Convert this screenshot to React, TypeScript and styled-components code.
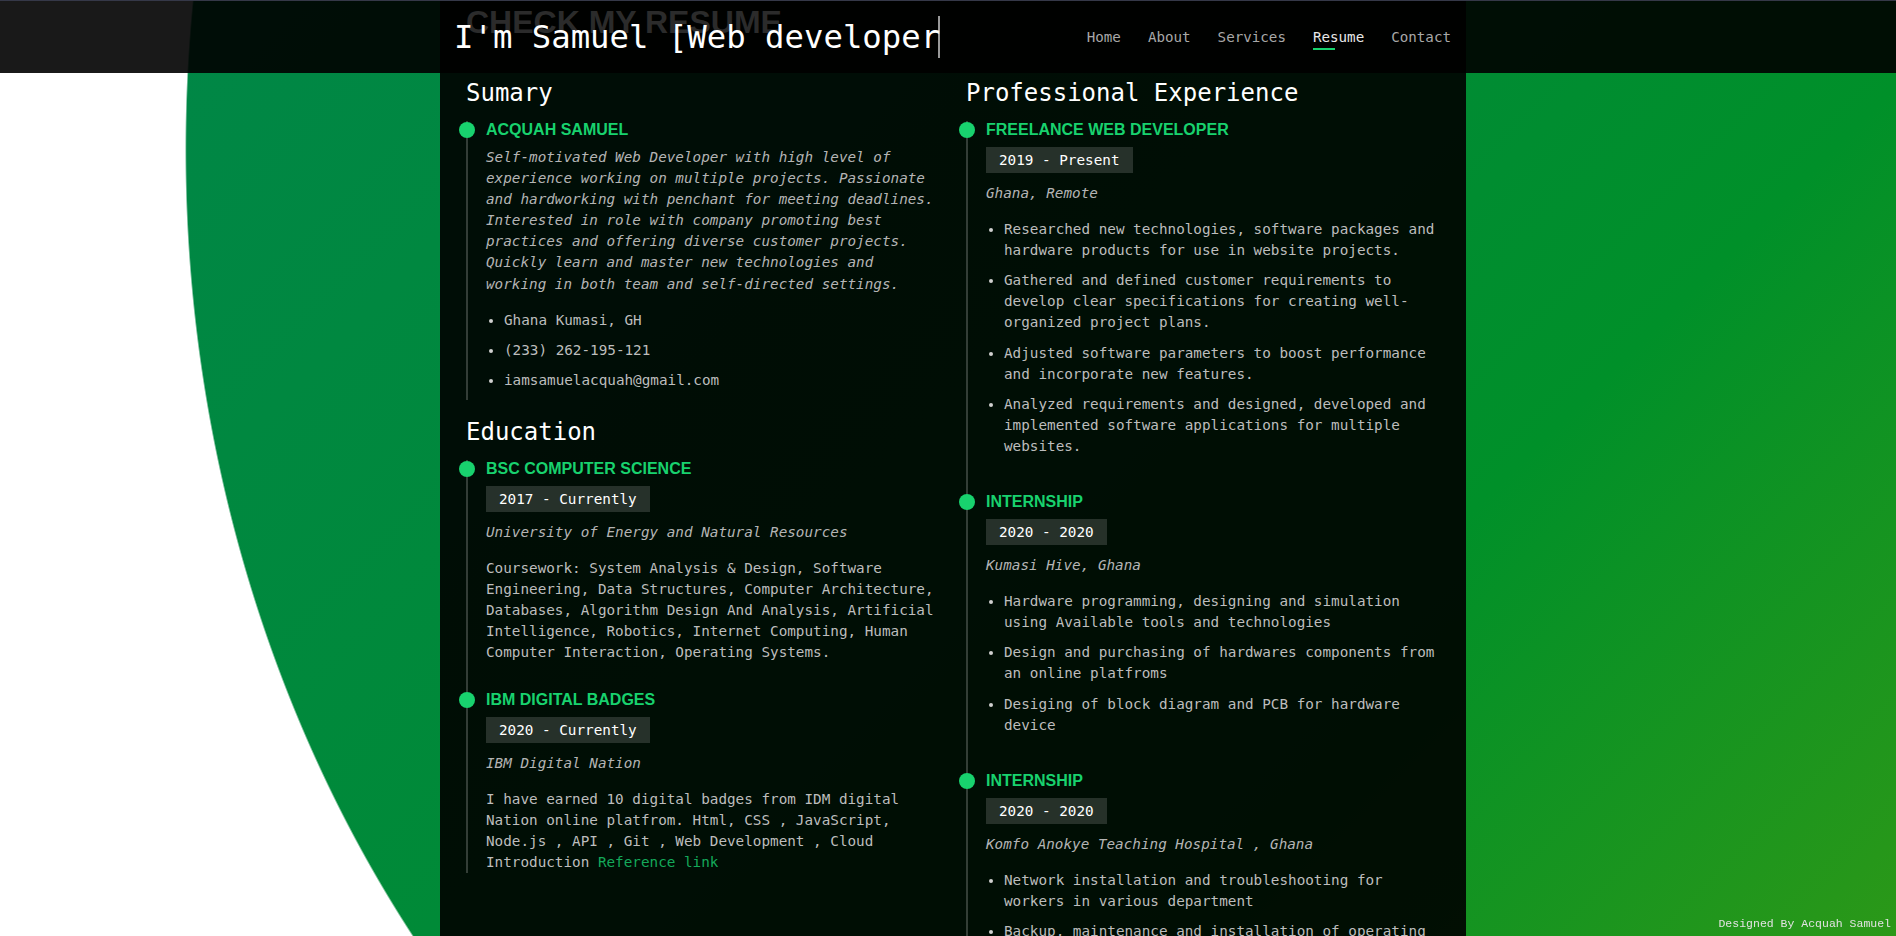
import React from 'react'
import styled, { createGlobalStyle } from 'styled-components'

const MONO = `'DejaVu Sans Mono', 'Liberation Mono', monospace`
const SANS = `'Liberation Sans', Arial, sans-serif`
const GREEN = '#18d26e'

// Link used inside the data below, so it has to exist first
const RefLink = styled.a`
  color: #14a95a;
  text-decoration: none;
`

// Data
interface Entry {
  title: string
  period?: string
  place?: string
  text?: React.ReactNode
  points?: string[]
}

const summary: Entry = {
  title: 'Acquah Samuel',
  place:
    'Self-motivated Web Developer with high level of experience working on multiple projects. Passionate and hardworking with penchant for meeting deadlines. Interested in role with company promoting best practices and offering diverse customer projects. Quickly learn and master new technologies and working in both team and self-directed settings.',
  points: ['Ghana Kumasi, GH', '(233) 262-195-121', 'iamsamuelacquah@gmail.com'],
}

const education: Entry[] = [
  {
    title: 'BSc Computer Science',
    period: '2017 - Currently',
    place: 'University of Energy and Natural Resources',
    text: 'Coursework: System Analysis & Design, Software Engineering, Data Structures, Computer Architecture, Databases, Algorithm Design And Analysis, Artificial Intelligence, Robotics, Internet Computing, Human Computer Interaction, Operating Systems.',
  },
  {
    title: 'IBM Digital Badges',
    period: '2020 - Currently',
    place: 'IBM Digital Nation',
    text: (
      <>
        I have earned 10 digital badges from IDM digital Nation online platfrom. Html, CSS , JavaScript, Node.js , API ,
        Git , Web Development , Cloud Introduction <RefLink href='#'>Reference link</RefLink>
      </>
    ),
  },
]

const experience: Entry[] = [
  {
    title: 'Freelance Web Developer',
    period: '2019 - Present',
    place: 'Ghana, Remote',
    points: [
      'Researched new technologies, software packages and hardware products for use in website projects.',
      'Gathered and defined customer requirements to develop clear specifications for creating well-organized project plans.',
      'Adjusted software parameters to boost performance and incorporate new features.',
      'Analyzed requirements and designed, developed and implemented software applications for multiple websites.',
    ],
  },
  {
    title: 'Internship',
    period: '2020 - 2020',
    place: 'Kumasi Hive, Ghana',
    points: [
      'Hardware programming, designing and simulation using Available tools and technologies',
      'Design and purchasing of hardwares components from an online platfroms',
      'Desiging of block diagram and PCB for hardware device',
    ],
  },
  {
    title: 'Internship',
    period: '2020 - 2020',
    place: 'Komfo Anokye Teaching Hospital , Ghana',
    points: [
      'Network installation and troubleshooting for workers in various department',
      'Backup, maintenance and installation of operating systems and software applications',
    ],
  },
]

const navItems = ['Home', 'About', 'Services', 'Resume', 'Contact']

// Timeline item
function ResumeItem({ entry }: { entry: Entry }): JSX.Element {
  return (
    <Item>
      <ItemHeading>{entry.title}</ItemHeading>
      {entry.period && <Period>{entry.period}</Period>}
      {entry.place && <Place>{entry.place}</Place>}
      {entry.text && <Text>{entry.text}</Text>}
      {entry.points && (
        <Points>
          {entry.points.map(point => (
            <Point key={point}>{point}</Point>
          ))}
        </Points>
      )}
    </Item>
  )
}

export default function App(): JSX.Element {
  return (
    <Page>
      <GlobalStyle />
      <Header>
        <HeaderInner>
          <Brand>
            I'm Samuel [Web developer<Cursor />
          </Brand>
          <Nav>
            {navItems.map(item => (
              <NavLink key={item} href='#' $active={item === 'Resume'}>
                {item}
              </NavLink>
            ))}
          </Nav>
        </HeaderInner>
      </Header>

      <Panel>
        <GhostTitle>Check my resume</GhostTitle>
        <Columns>
          <Column>
            <Section>
              <SectionTitle>Sumary</SectionTitle>
              <ResumeItem entry={summary} />
            </Section>
            <Section>
              <SectionTitle>Education</SectionTitle>
              {education.map(entry => (
                <ResumeItem key={entry.title} entry={entry} />
              ))}
            </Section>
          </Column>
          <Column>
            <Section>
              <SectionTitle>Professional Experience</SectionTitle>
              {experience.map(entry => (
                <ResumeItem key={entry.place} entry={entry} />
              ))}
            </Section>
          </Column>
        </Columns>
      </Panel>

      <Credit>Designed By Acquah Samuel</Credit>
    </Page>
  )
}

// Styled components
const GlobalStyle = createGlobalStyle`
  * { box-sizing: border-box; }
  html, body {
    margin: 0;
    padding: 0;
    height: 100%;
    overflow: hidden;
  }
  body {
    font-family: ${MONO};
    background: #fff;
  }
`

const Page = styled.div`
  height: 100vh;
  overflow: hidden;
  background:
    radial-gradient(1115px 1300px at 1300px 150px, rgba(255, 255, 255, 0) 99.85%, #ffffff 100%),
    linear-gradient(135deg, #008649 0%, #008a37 48%, #009029 70%, #2b9818 100%);
`

const Header = styled.header`
  position: absolute;
  top: 0;
  left: 0;
  right: 0;
  height: 73px;
  border-top: 1px solid #353848;
  background: rgba(0, 0, 0, 0.9);
`

const HeaderInner = styled.div`
  width: 1026px;
  height: 100%;
  margin-left: calc(50% - 508px);
  padding: 0 15px 0 14px;
  display: flex;
  align-items: center;
  justify-content: space-between;
`

const Brand = styled.h1`
  position: relative;
  z-index: 2;
  margin: 0;
  display: flex;
  align-items: center;
  font: 400 32.3px/39px ${MONO};
  color: #fff;
  white-space: pre;
`

const Cursor = styled.span`
  width: 2px;
  height: 42px;
  margin-left: -2px;
  background: rgba(255, 255, 255, 0.6);
`

const Nav = styled.nav`
  position: relative;
  z-index: 2;
  display: flex;
  gap: 27px;
`

const NavLink = styled.a<{ $active?: boolean }>`
  position: relative;
  font: 400 14.2px/20px ${MONO};
  color: ${props => (props.$active ? '#e8e8e8' : '#a8a8a8')};
  text-decoration: none;

  &::after {
    content: '';
    display: ${props => (props.$active ? 'block' : 'none')};
    position: absolute;
    left: 0;
    bottom: -3px;
    width: 22px;
    height: 2px;
    background: ${GREEN};
  }
`

const Panel = styled.main`
  width: 1026px;
  min-height: 100%;
  margin-left: calc(50% - 508px);
  padding: 6px 27px 40px 26px;
  background: rgba(0, 0, 0, 0.9);
`

const GhostTitle = styled.h2`
  position: relative;
  margin: 0 0 23px;
  font: 700 32px/32px ${SANS};
  text-transform: uppercase;
  color: #2b2b2b;
`

const Columns = styled.div`
  display: grid;
  grid-template-columns: 1fr 1fr;
  column-gap: 27px;
`

const Column = styled.div`
  display: flex;
  flex-direction: column;
`

const Section = styled.section`
  display: flex;
  flex-direction: column;
`

const SectionTitle = styled.h3`
  margin: 18px 0 14px;
  font: 400 24px/28px ${MONO};
  color: #fff;
`

const Item = styled.div`
  position: relative;
  padding: 0 0 27px 18px;
  border-left: 2px solid rgba(255, 255, 255, 0.2);
  font: 400 14.3px/21.1px ${MONO};
  color: #bdbdbd;

  &:last-child {
    padding-bottom: 0;
  }

  &::before {
    content: '';
    position: absolute;
    left: -9px;
    top: 1px;
    width: 16px;
    height: 16px;
    border-radius: 50%;
    background: ${GREEN};
  }

  & > *:last-child {
    margin-bottom: 0;
  }
`

const ItemHeading = styled.h4`
  margin: 0 0 8px;
  font: 700 16px/18px ${SANS};
  text-transform: uppercase;
  color: ${GREEN};
`

const Period = styled.h5`
  width: fit-content;
  margin: 0 0 10px;
  padding: 4px 13px;
  font: 400 14.3px/18px ${MONO};
  color: #fff;
  background: rgba(255, 255, 255, 0.15);
`

const Place = styled.p`
  margin: 0 0 15px;
  font-style: italic;
  color: #b4b4b4;
`

const Text = styled.p`
  margin: 0 0 15px;
`

const Points = styled.ul`
  margin: 0 0 15px;
  padding-left: 18px;
`

const Point = styled.li`
  padding-bottom: 9px;

  &::marker {
    font-family: ${SANS};
    color: #d0d0d0;
  }
`

const Credit = styled.footer`
  position: fixed;
  right: 5px;
  bottom: 5px;
  font: 400 11.5px/14px 'Liberation Mono', monospace;
  color: #e2e2e2;
`
